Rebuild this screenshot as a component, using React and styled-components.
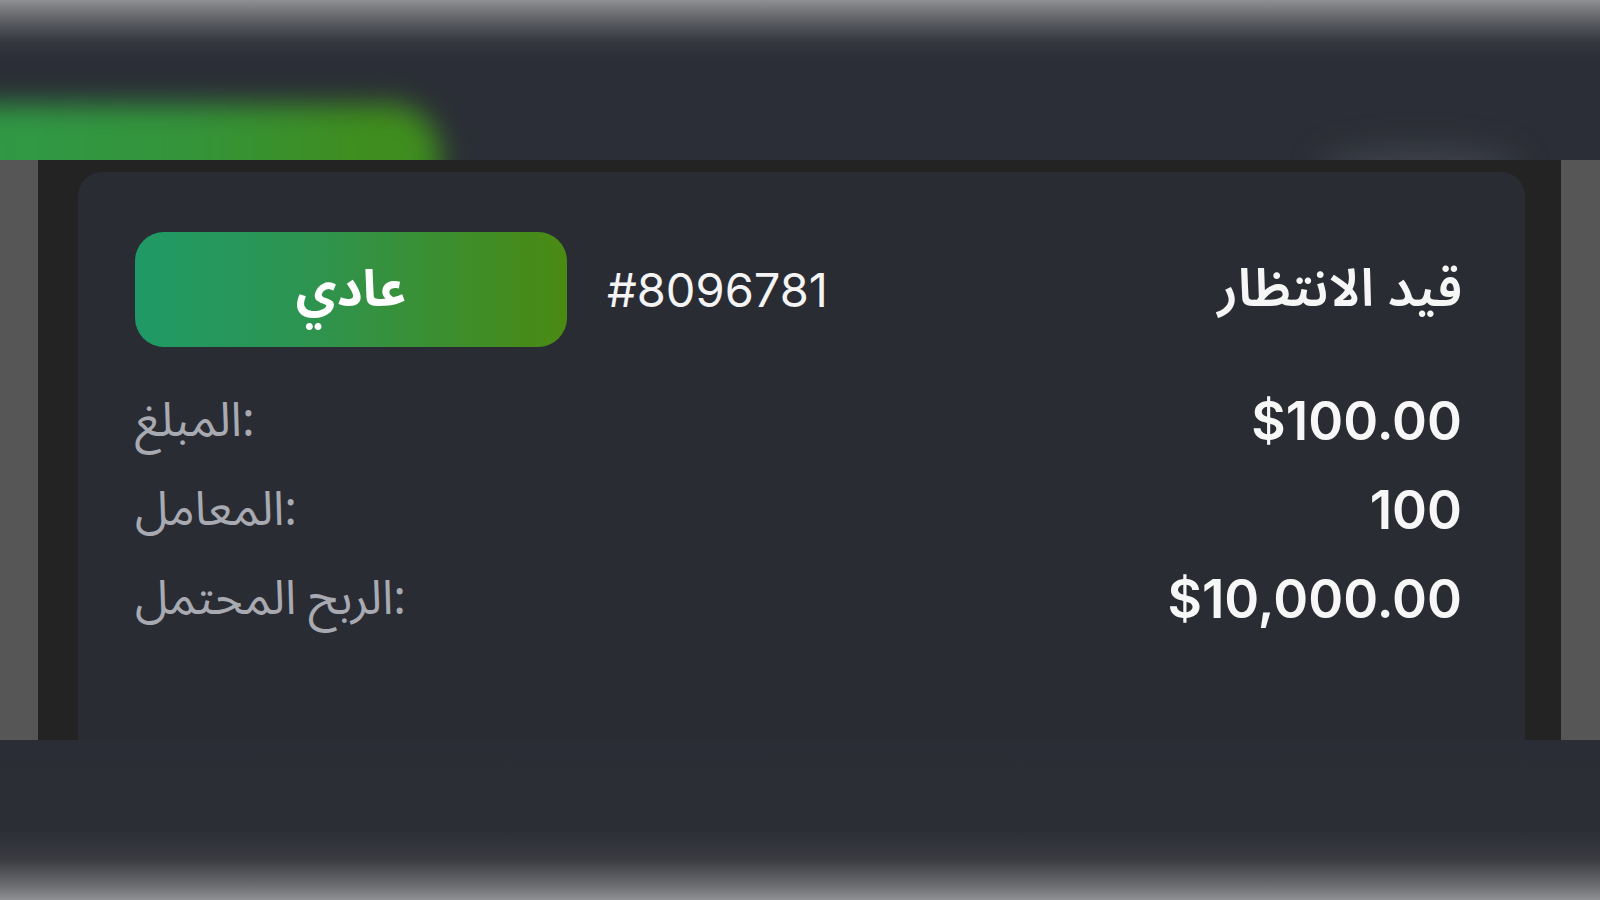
import React from "react";
import styled, { createGlobalStyle } from "styled-components";

const Global = createGlobalStyle`
  html, body { margin: 0; padding: 0; background: #2a2d35; }
  body { width: 1600px; height: 900px; overflow: hidden; font-family: Inter, "Noto Sans Arabic", "DejaVu Sans", sans-serif; }
`;

const Page = styled.div`
  width: 1600px;
  height: 900px;
  display: flex;
  flex-direction: column;
`;

const TopBand = styled.div`
  position: relative;
  height: 160px;
  overflow: hidden;
  background: linear-gradient(to bottom, #8e8f92 0px, #5a5c61 22px, #34373e 42px, #2b2e36 60px, #2b2e36 100%);
`;

const GreenBlob = styled.div`
  position: absolute;
  left: -60px;
  top: 104px;
  width: 500px;
  height: 130px;
  border-radius: 50px;
  background: linear-gradient(90deg, #2f9a48 0%, #34943a 50%, #3f8d1e 85%);
  filter: blur(14px);
`;

const Glow = styled.div`
  position: absolute;
  right: 80px;
  top: 148px;
  width: 200px;
  height: 40px;
  border-radius: 50%;
  background: rgba(85, 88, 98, 0.5);
  filter: blur(16px);
`;

const Middle = styled.div`
  height: 580px;
  display: flex;
`;

const GraySide = styled.div`
  width: ${(p) => p.$w}px;
  background: #565656;
`;

const DarkEdge = styled.div`
  width: ${(p) => p.$w}px;
  background: #232324;
`;

const CardArea = styled.div`
  flex: 1;
  background: #232324;
  padding-top: 12px;
  display: flex;
  flex-direction: column;
`;

const Card = styled.div`
  flex: 1;
  background: #2a2c34;
  border-radius: 24px 24px 0 0;
  padding: 60px 63px 0 57px;
  direction: ltr;
`;

const Header = styled.div`
  display: flex;
  align-items: center;
  height: 115px;
`;

const Badge = styled.div`
  width: 432px;
  height: 115px;
  border-radius: 29px;
  background: linear-gradient(90deg, #1f9a66 0%, #2d9450 40%, #4a8a12 100%);
  display: flex;
  align-items: center;
  justify-content: center;
  color: #ffffff;
  font-family: "Noto Sans Arabic", "DejaVu Sans", sans-serif;
  font-weight: 700;
  font-size: 50px;
  line-height: 70px;
  direction: rtl;
`;

const OrderId = styled.div`
  margin-left: 40px;
  color: #f4f4f4;
  font-family: Inter, Roboto, sans-serif;
  font-size: 47px;
  font-weight: 400;
  line-height: 60px;
`;

const Status = styled.div`
  margin-left: auto;
  color: #f6f6f6;
  font-family: "Noto Sans Arabic", "DejaVu Sans", sans-serif;
  font-size: 52px;
  font-weight: 600;
  line-height: 72px;
  direction: rtl;
`;

const Rows = styled.div`
  margin-top: 29px;
  display: flex;
  flex-direction: column;
`;

const Row = styled.div`
  height: 89px;
  display: flex;
  align-items: center;
  justify-content: space-between;
`;

const Label = styled.span`
  color: #a8aab1;
  font-family: "Noto Sans Arabic", "DejaVu Sans", sans-serif;
  font-size: 47.5px;
  font-weight: 400;
  line-height: 66px;
  unicode-bidi: isolate;
  direction: ltr;
`;

const Value = styled.span`
  color: #f7f7f7;
  font-family: Inter, Roboto, sans-serif;
  font-size: 53px;
  font-weight: 600;
  line-height: 66px;
`;

const BottomBand = styled.div`
  flex: 1;
  background: linear-gradient(to bottom, #2a2d35 0px, #2b2e35 90px, #3a3c42 120px, #6b6c70 145px, #8f9093 160px);
`;

const rows = [
  { label: "المبلغ", value: "$100.00" },
  { label: "المعامل", value: "100" },
  { label: "الربح المحتمل", value: "$10,000.00" },
];

export default function App() {
  return (
    <>
      <Global />
      <Page>
        <TopBand>
          <GreenBlob />
          <Glow />
        </TopBand>
        <Middle>
          <GraySide $w={38} />
          <DarkEdge $w={40} />
          <CardArea>
            <Card>
              <Header>
                <Badge>عادي</Badge>
                <OrderId>#8096781</OrderId>
                <Status>قيد الانتظار</Status>
              </Header>
              <Rows>
                {rows.map((r) => (
                  <Row key={r.value}>
                    <Label>
                      <bdi>{r.label}</bdi>:
                    </Label>
                    <Value>{r.value}</Value>
                  </Row>
                ))}
              </Rows>
            </Card>
          </CardArea>
          <DarkEdge $w={36} />
          <GraySide $w={39} />
        </Middle>
        <BottomBand />
      </Page>
    </>
  );
}
